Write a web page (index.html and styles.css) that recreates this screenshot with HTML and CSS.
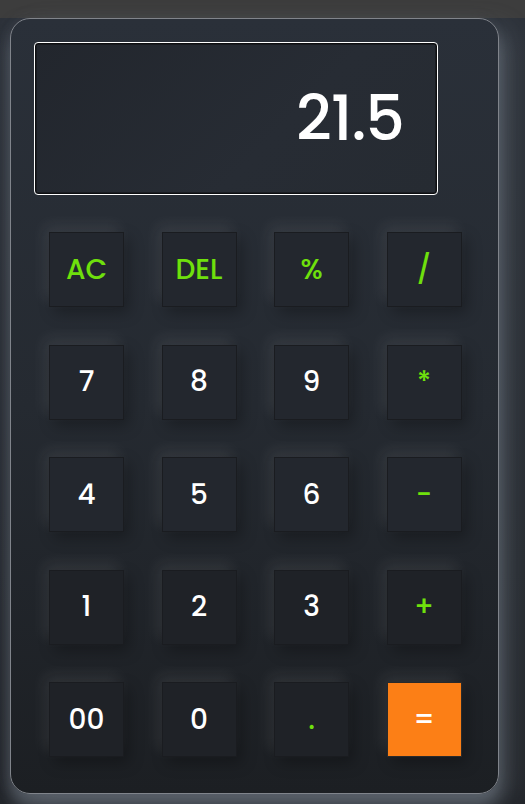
FILE: index.html
```html
<!DOCTYPE html>
<html lang="en">
<head>
<meta charset="utf-8">
<title>Calculator</title>
<link rel="stylesheet" href="styles.css">
</head>
<body>
<div class="topbar"></div>
<main class="stage">
  <section class="calc">
    <div class="display"><span class="value">21.5</span></div>
    <div class="keys">
      <button class="key op">AC</button>
      <button class="key op">DEL</button>
      <button class="key op">%</button>
      <button class="key op">/</button>
      <button class="key">7</button>
      <button class="key">8</button>
      <button class="key">9</button>
      <button class="key op">*</button>
      <button class="key">4</button>
      <button class="key">5</button>
      <button class="key">6</button>
      <button class="key op">-</button>
      <button class="key">1</button>
      <button class="key">2</button>
      <button class="key">3</button>
      <button class="key op">+</button>
      <button class="key">00</button>
      <button class="key">0</button>
      <button class="key op">.</button>
      <button class="key equal">=</button>
    </div>
  </section>
</main>
</body>
</html>
```
FILE: styles.css
```css
html, body {
  margin: 0;
  padding: 0;
  height: 100%;
  overflow: hidden;
}
body {
  background: #3c3c3c;
  font-family: "Poppins", "Inter", "Noto Sans", sans-serif;
}
.topbar {
  height: 18px;
  background: #3d3d3d;
}
.stage {
  height: 786px;
  background: linear-gradient(to bottom, #2d323a 0%, #262a30 70%, #22252a 100%);
  padding: 0 0 0 10px;
  box-sizing: border-box;
}
.calc {
  width: 489px;
  height: 776px;
  box-sizing: border-box;
  border: 1px solid #80848b;
  border-radius: 20px;
  background: linear-gradient(to bottom, #2a3039 0%, #252a31 50%, #1c1f23 100%);
  box-shadow: 12px 8px 24px rgba(130, 138, 150, 0.3), 0 14px 16px rgba(110, 118, 130, 0.55), -4px 0 14px rgba(90, 96, 106, 0.15);
  padding: 23px 0 0 23px;
}
.display {
  width: 404px;
  height: 153px;
  box-sizing: border-box;
  border: 1px solid #ffffff;
  border-radius: 4px;
  box-shadow: inset 0 0 0 1.5px #0e0f11;
  background: linear-gradient(135deg, #22262d 0%, #272c34 60%, #262b32 100%);
  display: flex;
  align-items: center;
  justify-content: flex-end;
  padding-right: 33px;
}
.value {
  color: #ffffff;
  font-size: 62px;
  font-weight: 500;
  letter-spacing: -1px;
  line-height: 1;
}
.keys {
  margin-top: 37px;
  margin-left: 15px;
  display: grid;
  grid-template-columns: repeat(4, 75px);
  grid-auto-rows: 75px;
  column-gap: 37.5px;
  row-gap: 37.5px;
}
.key {
  margin: 0;
  padding: 0;
  border: 1px solid #1a1c20;
  background: #23272e;
  color: #ffffff;
  font-family: inherit;
  font-size: 28px;
  font-weight: 500;
  display: flex;
  align-items: center;
  justify-content: center;
  box-shadow: -5px -7px 14px rgba(255, 255, 255, 0.08), 5px 6px 14px rgba(0, 0, 0, 0.28);
}
.key:nth-child(n+13) {
  background: #1f2227;
}
.op {
  color: #6fe00c;
}
.equal {
  background: #fc7f16 !important;
  border-color: #2a2a2a;
  color: #ffffff;
}
```
